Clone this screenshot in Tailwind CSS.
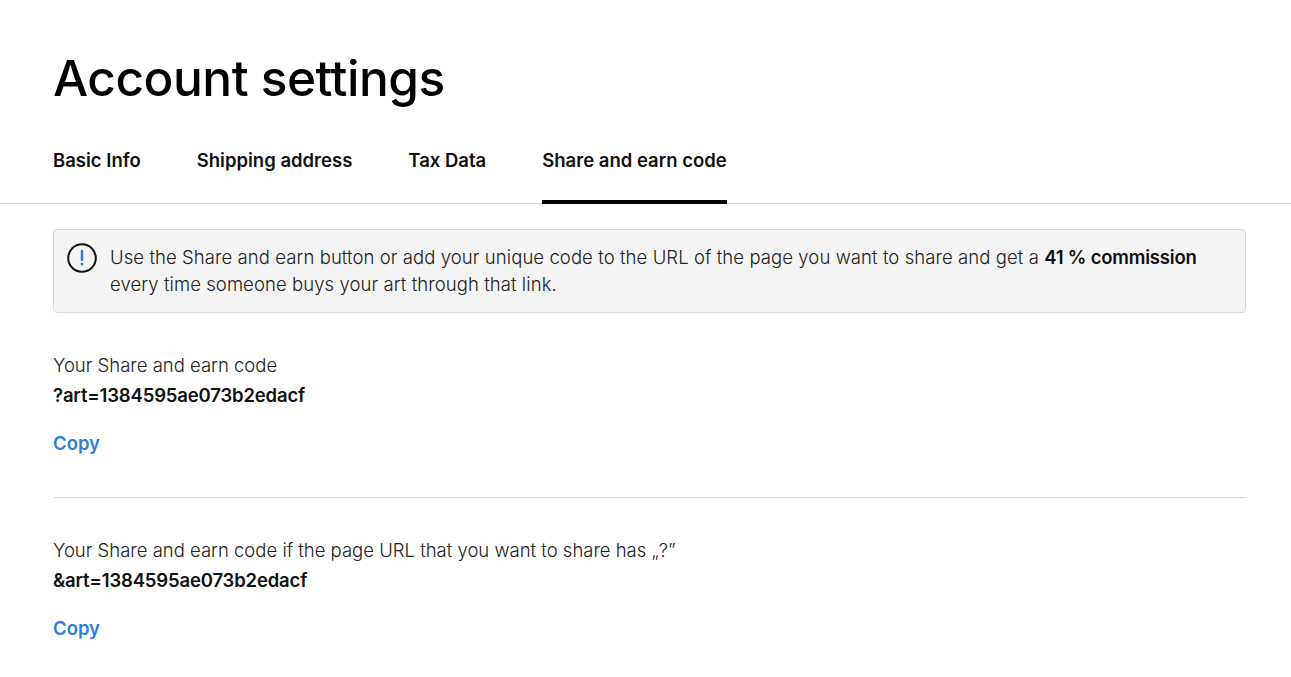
<!DOCTYPE html>
<html lang="en">
<head>
    <meta charset="UTF-8">
    <title>Account settings</title>
    <script src="https://cdn.jsdelivr.net/npm/@tailwindcss/browser@4"></script>
</head>
<body class="bg-white text-[#111] font-['Inter','Open_Sans',sans-serif] overflow-hidden">
    <div class="h-[677px]">
        <h1 class="px-[53px] pt-[46px] text-[49.6px] leading-[64px] font-medium text-black tracking-[-0.5px]">Account settings</h1>

        <!-- Tabs -->
        <div class="mt-[18px] flex gap-[56px] px-[53px] border-b border-[#d9d9d9] h-[76px] text-[18.5px] font-semibold text-[#111]">
            <div class="pt-[19px]">Basic Info</div>
            <div class="pt-[19px]">Shipping address</div>
            <div class="pt-[19px]">Tax Data</div>
            <div class="pt-[19px] border-b-4 border-black h-[76px]">Share and earn code</div>
        </div>

        <div class="px-[53px] pt-[25px]">
            <!-- Info box -->
            <div class="flex gap-[13px] h-[84px] w-[1193px] rounded border border-[#d9d9d9] bg-[#f4f4f4] pl-[13px] pt-[14px] text-[18.5px] leading-[27px] font-light text-[#222]">
                <svg class="w-[30px] h-[30px] shrink-0 -mt-px" viewBox="0 0 30 30" fill="none">
                    <circle cx="15" cy="15" r="13.8" stroke="#111" stroke-width="2"/>
                    <path d="M15 8v9" stroke="#2a7fd8" stroke-width="2.4" stroke-linecap="round"/>
                    <circle cx="15" cy="21" r="1.4" fill="#2a7fd8"/>
                </svg>
                <p class="w-[1095px] tracking-[0.08px]">Use the Share and earn button or add your unique code to the URL of the page you want to share and get a <b class="font-semibold text-[#111] tracking-[-0.2px]">41 % commission</b> every time someone buys your art through that link.</p>
            </div>

            <div class="mt-[39px] w-[1193px] border-b border-[#d9d9d9] h-[146px] text-[18.5px]">
                <div class="leading-[27px] font-light text-[#222]">Your Share and earn code</div>
                <div class="mt-[3px] leading-[27px] font-semibold tracking-[-0.16px]">?art=1384595ae073b2edacf</div>
                <div class="mt-[21px] leading-[27px] font-semibold text-[#2a7fd8]">Copy</div>
            </div>

            <div class="mt-[39px] text-[18.5px]">
                <div class="leading-[27px] font-light text-[#222]">Your Share and earn code if the page URL that you want to share has „?”</div>
                <div class="mt-[3px] leading-[27px] font-semibold tracking-[-0.16px]">&amp;art=1384595ae073b2edacf</div>
                <div class="mt-[21px] leading-[27px] font-semibold text-[#2a7fd8]">Copy</div>
            </div>
        </div>
    </div>
</body>
</html>
